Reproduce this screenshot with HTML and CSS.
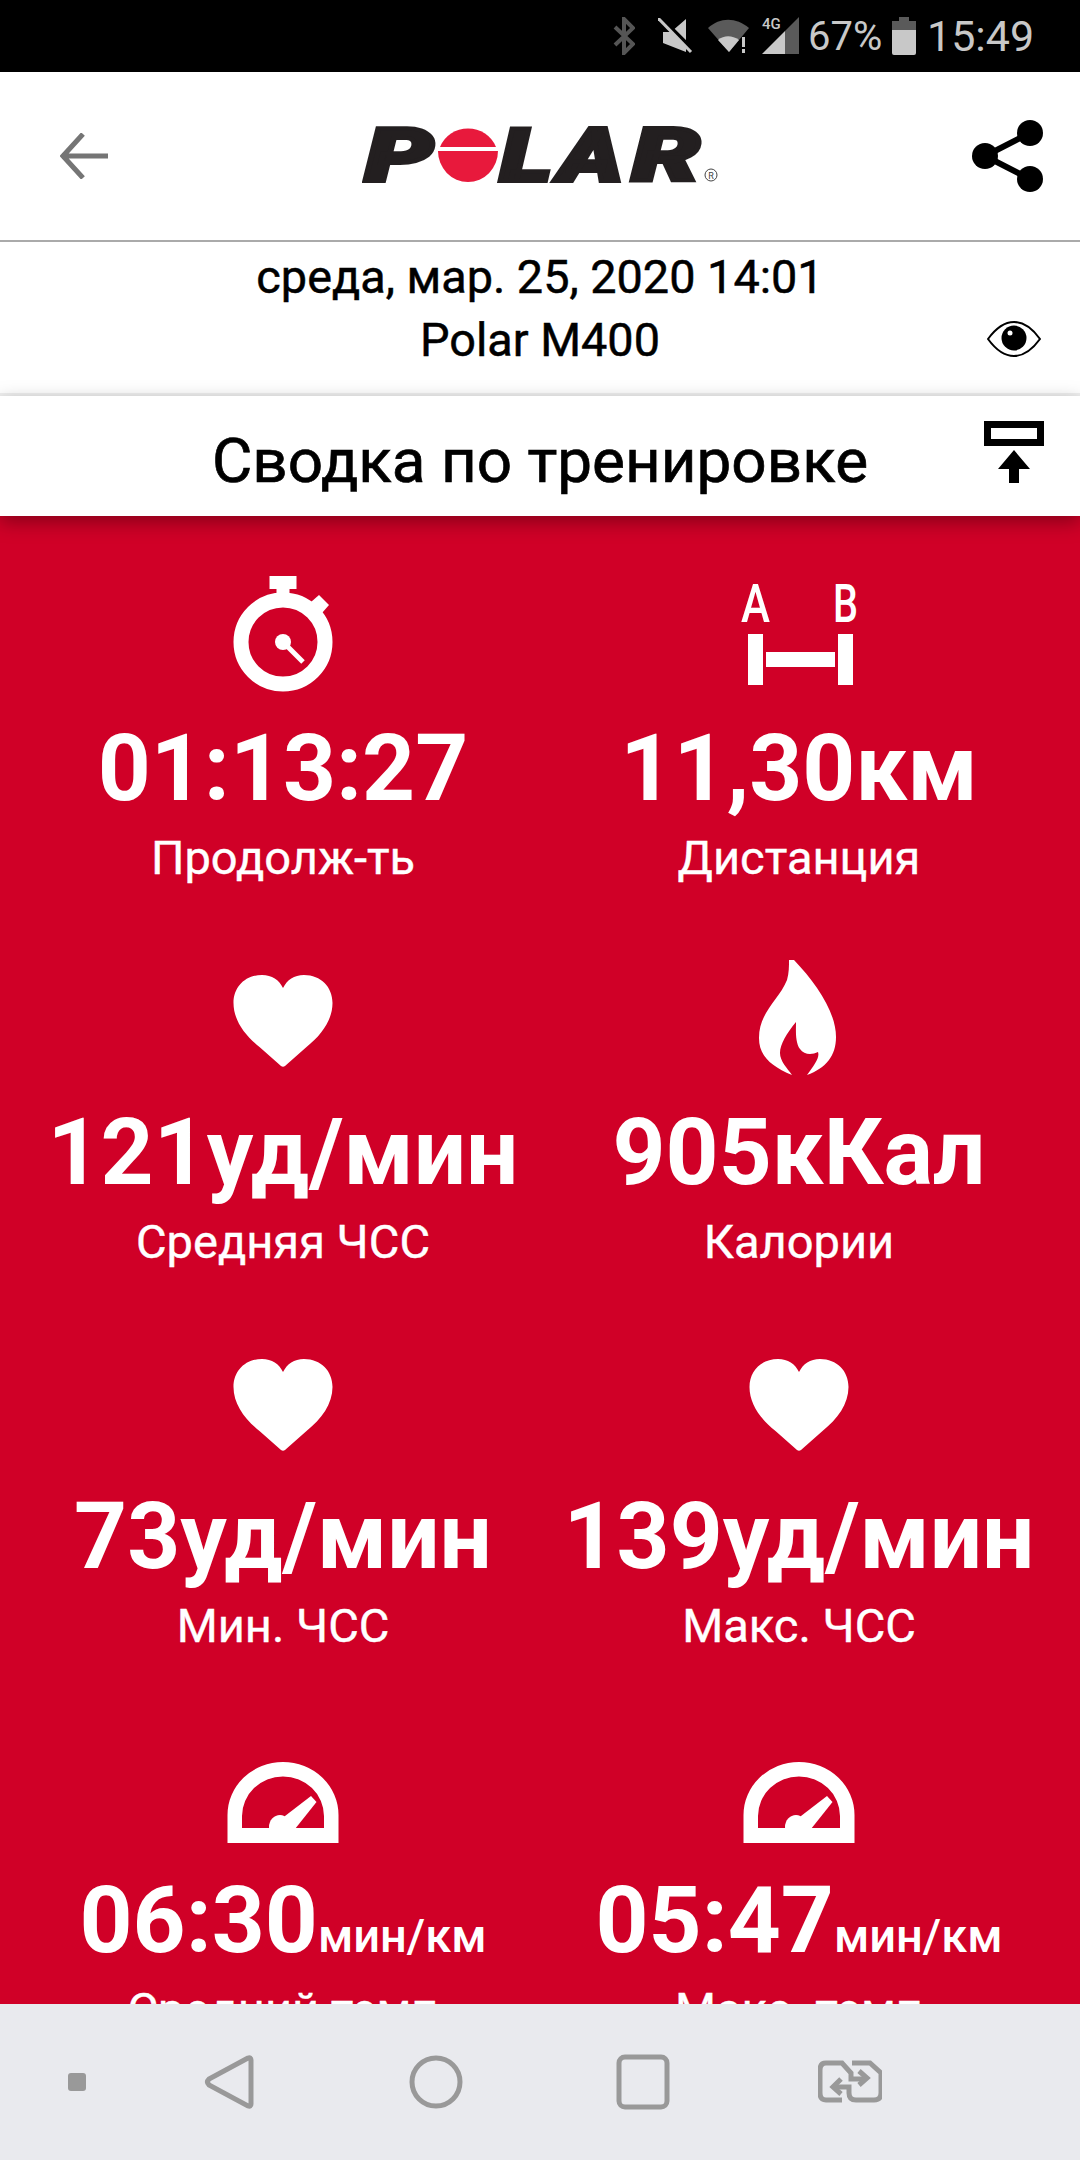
FILE: index.html
```html
<!DOCTYPE html>
<html lang="ru">
<head>
    <meta charset="UTF-8">
    <meta name="viewport" content="width=device-width, initial-scale=1.0">
    <title>Сводка по тренировке</title>
    <link rel="stylesheet" href="styles.css">
</head>
<body>
    <div class="phone">
        <div class="status-bar">
            <svg class="st-bt" width="22" height="38" viewBox="0 0 22 38"><path d="M2 10 20 27 11 36V2l9 9L2 28" fill="none" stroke="#555" stroke-width="4"/></svg>
            <svg class="st-mute" width="36" height="36" viewBox="0 0 36 36"><path d="M5 14h8L28 1v33L5 25z" fill="#c8c8c8"/><path d="M3 0 33 30" stroke="#000" stroke-width="4"/><path d="M0 0 33 34" stroke="#c8c8c8" stroke-width="3"/></svg>
            <svg class="st-wifi" width="42" height="36" viewBox="0 0 42 36"><path d="M0 10C12-1 28-1 41 10L21 34z" fill="#5a5a5a"/><path d="M10 22c6-5 14-5 21 0L21 34z" fill="#c8c8c8"/><path d="M34 19h3v10h-3zM34 31h3v4h-3z" fill="#c8c8c8"/></svg>
            <div class="st-signal">
                <svg width="38" height="38" viewBox="0 0 38 38"><path d="M37 0V37H23V14z" fill="#5a5a5a"/><path d="M23 14V37H0z" fill="#c8c8c8"/></svg>
                <span class="st-4g">4G</span>
            </div>
            <span class="st-pct">67%</span>
            <svg class="st-batt" width="24" height="38" viewBox="0 0 24 38"><path d="M7 0h10v4h7v10H0V4h7z" fill="#5a5a5a"/><path d="M0 13h24v23q0 2-2 2H2q-2 0-2-2z" fill="#c8c8c8"/></svg>
            <span class="st-time">15:49</span>
        </div>

        <header class="app-bar">
            <svg width="48" height="46" viewBox="0 0 48 46"><path d="M23 1 3 23l20 22M3 23h45" fill="none" stroke="#757575" stroke-width="5"/></svg>
            <svg class="logo" width="356" height="92" viewBox="0 0 356 92">
                <g class="logo-letters">
                    <text x="3" y="71" textLength="68" lengthAdjust="spacingAndGlyphs">P</text>
                    <text x="138" y="71" textLength="52" lengthAdjust="spacingAndGlyphs">L</text>
                    <text x="197" y="71" textLength="64" lengthAdjust="spacingAndGlyphs">A</text>
                    <text x="270" y="71" textLength="68" lengthAdjust="spacingAndGlyphs">R</text>
                </g>
                <path d="M78 37a30 29 0 0 1 56 0z" fill="#e8193c"/>
                <path d="M76 41h60a30 31 0 0 1-60 0z" fill="#e8193c"/>
                <circle cx="349" cy="65" r="6" fill="none" stroke="#444" stroke-width="1"/>
                <text class="logo-reg" x="349" y="68.500" text-anchor="middle">R</text>
            </svg>
            <svg width="71" height="72" viewBox="0 0 71 72"><path d="M58 13 13 36l45 23" fill="none" stroke="#000" stroke-width="6"/><circle cx="58" cy="13" r="13"/><circle cx="58" cy="59" r="13"/><circle cx="13" cy="36" r="13"/></svg>
        </header>

        <section class="info-row">
            <div class="info-text">
                <div>среда, мар. 25, 2020 14:01</div>
                <div>Polar M400</div>
            </div>
            <svg class="eye" width="54" height="36" viewBox="0 0 54 36"><path d="M1 18C9 7 18 1 27 1s18 6 26 17c-8 11-17 17-26 17S9 29 1 18z" fill="none" stroke="#000" stroke-width="2"/><circle cx="27" cy="17" r="12.500"/><circle cx="23" cy="12" r="2.500" fill="#fff"/></svg>
        </section>

        <section class="title-row">
            <h1 class="page-title">Сводка по тренировке</h1>
            <svg class="export" width="60" height="62" viewBox="0 0 60 62"><path d="M3.500 3.500h53v18h-53z" fill="#fff" stroke="#000" stroke-width="7"/><path d="M30 29 46 48H35v14H25V48H14z"/></svg>
        </section>

        <main class="stats">
            <div class="stat">
                <svg class="stat-icon" viewBox="0 0 150 150">
                    <path d="M61.500 30h27v13h-7v10h-13V43h-7z"/>
                    <path d="m103 56 8-7 10 10-7 8z"/>
                    <circle cx="75" cy="96" r="42" class="line" stroke-width="15"/>
                    <circle cx="75" cy="96" r="8"/>
                    <path d="M75 96 95 116" class="line" stroke-width="5"/>
                </svg>
                <div class="stat-value">01:13:27</div>
                <div class="stat-label">Продолж-ть</div>
            </div>
            <div class="stat">
                <svg class="stat-icon" viewBox="0 0 150 150">
                    <text class="ab" x="17" y="76" textLength="29" lengthAdjust="spacingAndGlyphs">A</text>
                    <text class="ab" x="109" y="76" textLength="25" lengthAdjust="spacingAndGlyphs">B</text>
                    <path d="M24 88h15v51H24zM114 88h15v51h-15zM42 106h69v15H42z"/>
                </svg>
                <div class="stat-value">11,30км</div>
                <div class="stat-label">Дистанция</div>
            </div>
            <div class="stat">
                <svg class="stat-icon" viewBox="0 0 150 150"><use href="#heart"/></svg>
                <div class="stat-value">121уд/мин</div>
                <div class="stat-label">Средняя ЧСС</div>
            </div>
            <div class="stat">
                <svg class="stat-icon" viewBox="0 0 150 150">
                    <path d="M65 30h5c22 23 42 52 42 77 0 19-10 31-29 38 7-10 13-17 11-23-6 3-14 3-18-3-5-7-4-19-4-27-9 11-16 22-16 31 0 8 7 15 12 22-21-9-33-19-33-37 0-26 20-38 28-58 2-7 2-14 2-20z"/>
                </svg>
                <div class="stat-value">905кКал</div>
                <div class="stat-label">Калории</div>
            </div>
            <div class="stat">
                <svg class="stat-icon" viewBox="0 0 150 150"><use href="#heart"/></svg>
                <div class="stat-value">73уд/мин</div>
                <div class="stat-label">Мин. ЧСС</div>
            </div>
            <div class="stat">
                <svg class="stat-icon" viewBox="0 0 150 150"><use href="#heart"/></svg>
                <div class="stat-value">139уд/мин</div>
                <div class="stat-label">Макс. ЧСС</div>
            </div>
            <div class="stat">
                <svg class="stat-icon" viewBox="0 0 150 150"><use href="#gauge"/></svg>
                <div class="stat-value">06:30<span class="stat-unit">мин/км</span></div>
                <div class="stat-label">Средний темп</div>
            </div>
            <div class="stat">
                <svg class="stat-icon" viewBox="0 0 150 150"><use href="#gauge"/></svg>
                <div class="stat-value">05:47<span class="stat-unit">мин/км</span></div>
                <div class="stat-label">Макс. темп</div>
            </div>
        </main>

        <nav class="nav-bar">
            <svg class="nav-pin" width="64" height="64" viewBox="0 0 64 64"><rect x="23" y="23" width="18" height="18" rx="3" fill="#999"/></svg>
            <svg width="64" height="64" viewBox="0 0 64 64" class="nav-line"><path d="M52 8 13 29q-3 3 0 6l39 21q3 1 3-2V10q0-3-3-2z" transform="translate(-1 0)"/></svg>
            <svg width="64" height="64" viewBox="0 0 64 64" class="nav-line"><circle cx="32" cy="32" r="24"/></svg>
            <svg width="64" height="64" viewBox="0 0 64 64" class="nav-line"><rect x="8" y="7" width="48" height="50" rx="6"/></svg>
            <svg width="64" height="64" viewBox="0 0 64 64" class="nav-line nav-switch">
                <path d="M24 50H8q-6 0-6-7V20q0-7 6-7h16l9 10v6h13"/>
                <path d="M34 13h18l11 10v20q0 7-7 7H38q-7 0-7-7v-6H18"/>
                <path d="m41 21 8 7-8 7M23 29l-8 8 8 7"/>
            </svg>
        </nav>
    </div>

    <!-- shared icon shapes -->
    <svg class="defs" width="0" height="0">
        <defs>
            <path id="heart" d="M75 58C71 50 64 45 54 45 37 45 25.500 57 25.500 73c0 17 11 32 26 44l21.500 19q2 1.500 4 0L98.500 117c15-12 26-27 26-44 0-16-11.500-28-28.500-28-10 0-17 5-21 13z"/>
            <g id="gauge">
                <path fill-rule="evenodd" d="M19.500 145V117a55.500 53 0 0 1 111 0v28zM34 130h82v-12a41 39.500 0 0 0-82 0z"/>
                <ellipse cx="72" cy="129" rx="11" ry="12"/>
                <path d="m103 98 5.500 6L87 131H72l5-13z"/>
            </g>
        </defs>
    </svg>
</body>
</html>
```

FILE: styles.css
```css
:root {
    --red: #d00027;
    --status-grey: #c8c8c8;
}

* {
    box-sizing: border-box;
}

body {
    margin: 0;
    font-family: Roboto, sans-serif;
    background-color: #fff;
}

.phone {
    width: 1080px;
    height: 2160px;
    display: flex;
    flex-direction: column;
    overflow: hidden;
}

/* Status bar */
.status-bar {
    flex: 0 0 72px;
    background-color: #000;
    color: var(--status-grey);
    display: flex;
    align-items: center;
    padding-left: 613px;
}

.st-bt { margin-right: 23px; }
.st-mute { margin-right: 14px; }
.st-wifi { margin-right: 12px; }

.st-signal {
    position: relative;
    width: 38px;
    height: 38px;
    margin-right: 8px;
}

.st-4g {
    position: absolute;
    left: 0;
    top: 0;
    font-size: 15px;
    line-height: 15px;
    font-weight: 500;
}

.st-pct {
    font-size: 40px;
    width: 84px;
}

.st-time {
    font-size: 43px;
    margin-left: 11px;
}

/* App bar */
.app-bar {
    flex: 0 0 170px;
    display: flex;
    align-items: center;
    justify-content: space-between;
    padding: 0 37px 0 60px;
    border-bottom: 2px solid #aaa;
}

.logo-letters text {
    font-size: 73px;
    font-weight: 900;
    font-style: italic;
    fill: #231f20;
    stroke: #231f20;
    stroke-width: 4px;
}

.logo-reg {
    font-size: 9px;
    fill: #444;
}

/* Date and title rows */
.info-row,
.title-row {
    display: grid;
    grid-template-columns: 1fr auto 1fr;
    background-color: #fff;
}

.info-row {
    flex: 0 0 154px;
    padding: 4px 39px 0;
    border-bottom: 3px solid #f0f0f0;
}

.info-text {
    grid-column: 2;
    text-align: center;
    font-size: 46.8px;
    line-height: 63px;
    color: #000;
    -webkit-text-stroke: 0.5px #000;
}

.eye {
    grid-column: 3;
    justify-self: end;
    margin-top: 75px;
}

.title-row {
    flex: 0 0 120px;
    padding: 0 36px;
    position: relative;
    z-index: 1;
    box-shadow: 0 6px 18px rgba(0, 0, 0, 0.35);
}

.page-title {
    grid-column: 2;
    margin: 10px 0 0;
    font-size: 62px;
    font-weight: 400;
    line-height: 110px;
    color: #000;
    -webkit-text-stroke: 0.7px #000;
}

.export {
    grid-column: 3;
    justify-self: end;
    margin-top: 25px;
}

/* Stats grid */
.stats {
    flex: 1;
    min-height: 0;
    overflow: hidden;
    background-color: var(--red);
    color: #fff;
    display: grid;
    grid-template-columns: 516px 516px;
    grid-auto-rows: 384px;
    padding: 30px 0 0 25px;
}

.stat {
    display: flex;
    flex-direction: column;
    align-items: center;
}

.stat-icon {
    width: 150px;
    height: 150px;
    fill: #fff;
}

.stat-icon .line {
    fill: none;
    stroke: #fff;
}

.ab {
    font-size: 54px;
    font-weight: 500;
}

.stat-value {
    margin-top: 19px;
    font-size: 92.5px;
    font-weight: 700;
    line-height: 108px;
    white-space: nowrap;
}

.stat-unit {
    font-size: 47px;
    font-weight: 500;
    line-height: 1;
}

.stat-label {
    margin-top: 9px;
    font-size: 47px;
    line-height: 52px;
    white-space: nowrap;
    -webkit-text-stroke: 0.4px #fff;
}

/* Navigation bar */
.nav-bar {
    flex: 0 0 156px;
    background-color: #e9eaee;
    display: flex;
    align-items: center;
    gap: 143px;
    padding-left: 45px;
}

.nav-pin {
    margin-right: -55px;
}

.nav-line {
    fill: none;
    stroke: #999;
    stroke-width: 5;
}

.defs {
    position: absolute;
}
```
